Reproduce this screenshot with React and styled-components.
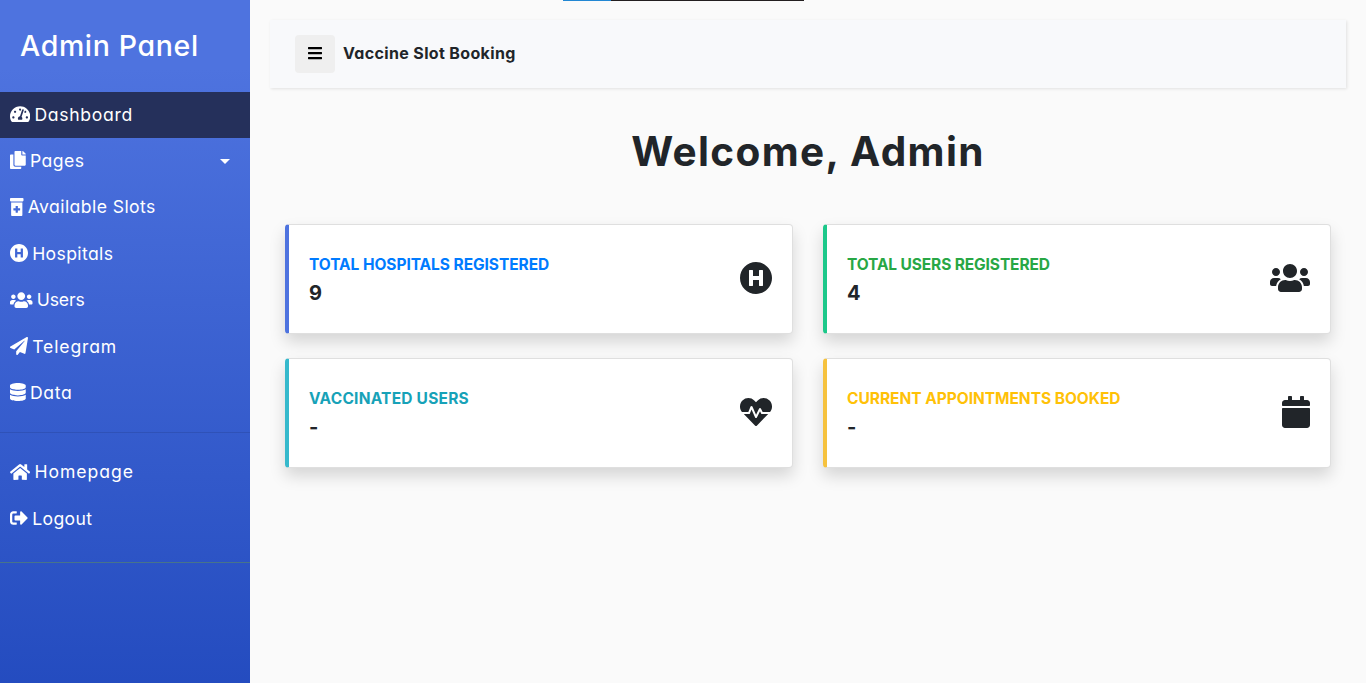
import React from "react";
import styled, { createGlobalStyle } from "styled-components";
import {
  FaTachometerAlt, FaCopy, FaPrescriptionBottleAlt, FaHospitalSymbol, FaUsers,
  FaPaperPlane, FaDatabase, FaHome, FaSignOutAlt, FaBars, FaHeartbeat, FaCalendar,
} from "react-icons/fa";

const GlobalStyle = createGlobalStyle`
  *, *::before, *::after { box-sizing: border-box; }
  body {
    margin: 0;
    background: #fafafa;
    color: #212529;
    font-family: Inter, "Open Sans", sans-serif;
    font-feature-settings: "cv11";
    font-size: 16px;
    line-height: 1.5;
    overflow: hidden;
  }
`;

const Page = styled.div`
  display: flex;
  min-height: 100vh;
`;

const Sidebar = styled.nav`
  flex: 0 0 250px;
  color: #fff;
  background: linear-gradient(180deg, #4e73df 10%, #224abe 104%);
`;

const Brand = styled.div`
  height: 91.6px;
  padding: 29px 20px 0;
  font-size: 28.5px;
  line-height: 33.6px;
  font-weight: 500;
  white-space: nowrap;
`;

const Label = styled.span`
  letter-spacing: ${(p) => p.$track || 0}px;
  white-space: nowrap;
`;

/* $units is the glyph's width on its 512-unit-high grid */
const Glyph = styled.span`
  display: flex;
  flex: none;
  width: ${(p) => (p.$size * p.$units) / 512}px;
  height: ${(p) => p.$size}px;

  svg {
    width: 100%;
    height: 100%;
  }
`;

const Menu = styled.ul`
  list-style: none;
  margin: 0;
  padding: 0 0 20px;
  border-bottom: 1px solid #47748b;
`;

const MenuItem = styled.li`
  display: flex;
  align-items: center;
  gap: 4.2px;
  height: 46.4px;
  padding: 0 20px 0 10px;
  font-size: 17.6px;
  background: ${(p) => (p.$active ? "#25305b" : "transparent")};

  ${Glyph} {
    margin-bottom: 1.4px;
  }
`;

const Caret = styled.span`
  margin-left: auto;
  border-top: 5.3px solid #fff;
  border-left: 5.5px solid transparent;
  border-right: 5.5px solid transparent;
`;

const Divider = styled.li`
  height: 1px;
  margin: 16px 0;
  background: rgba(0, 0, 0, 0.1);
`;

const Content = styled.main`
  flex: 1;
  padding: 20px;
`;

const TopBar = styled.header`
  display: flex;
  align-items: center;
  gap: 8px;
  height: 68px;
  padding: 0 25px;
  background: #f8f9fb;
  box-shadow: 1px 1px 3px rgba(0, 0, 0, 0.1);
  font-weight: 650;
`;

const AppName = styled.div`
  padding-bottom: 2px;
`;

const Toggle = styled.button`
  display: flex;
  align-items: center;
  justify-content: center;
  width: 40px;
  height: 38px;
  padding: 0 0 2px;
  border: 0;
  border-radius: 4px;
  background: #efefef;
  color: #000;
`;

const Title = styled.h1`
  margin: 40px 0 48px;
  font-size: 40.5px;
  line-height: 48px;
  font-weight: 700;
  text-align: center;
`;

const Cards = styled.section`
  display: grid;
  grid-template-columns: 1fr 1fr;
  gap: 24px 30px;
  padding: 0 15px;
`;

const Card = styled.article`
  display: flex;
  align-items: center;
  justify-content: space-between;
  height: 110px;
  padding: 0 20px 2px;
  background: #fff;
  border: 1px solid #dfdfdf;
  border-left: 4px solid ${(p) => p.$edge};
  border-radius: 4px;
  box-shadow: 0 8px 16px rgba(0, 0, 0, 0.15);
`;

const CardTitle = styled.div`
  padding-top: 1px;
  margin-bottom: 4px;
  color: ${(p) => p.$color};
  font-size: 15.5px;
  font-weight: 700;
  line-height: 24px;
  text-transform: uppercase;
`;

const CardValue = styled.div`
  font-size: 20px;
  font-weight: 700;
  line-height: 24px;
`;

const Progress = styled.div`
  position: absolute;
  top: 0;
  left: 563px;
  width: 241px;
  height: 1px;
  background: linear-gradient(90deg, #2287d3 48px, #231f20 48px);
`;

const mainLinks = [
  { icon: FaTachometerAlt, units: 576, text: "Dashboard", track: 0.68, active: true },
  { icon: FaCopy, units: 448, text: "Pages", track: 0.45, caret: true },
  { icon: FaPrescriptionBottleAlt, units: 384, text: "Available Slots", track: 0.42 },
  { icon: FaHospitalSymbol, units: 512, text: "Hospitals", track: 0.36 },
  { icon: FaUsers, units: 640, text: "Users", track: -0.1 },
  { icon: FaPaperPlane, units: 512, text: "Telegram", track: 0.86 },
  { icon: FaDatabase, units: 448, text: "Data", track: 0.65 },
];

const accountLinks = [
  { icon: FaHome, units: 576, text: "Homepage", track: 0.95 },
  { icon: FaSignOutAlt, units: 512, text: "Logout", track: 0.35 },
];

const stats = [
  { title: "Total Hospitals Registered", value: "9", icon: FaHospitalSymbol, units: 512, color: "#007bff", edge: "#4e73df", track: -0.06 },
  { title: "Total Users Registered", value: "4", icon: FaUsers, units: 640, color: "#28a745", edge: "#1cc88a", track: -0.12 },
  { title: "Vaccinated Users", value: "-", icon: FaHeartbeat, units: 512, color: "#17a2b8", edge: "#36b9cc", track: 0.22 },
  { title: "Current Appointments Booked", value: "-", icon: FaCalendar, units: 448, color: "#ffc107", edge: "#f6c23e", track: -0.03 },
];

function NavLink({ link }) {
  const Icon = link.icon;
  return (
    <MenuItem $active={link.active}>
      <Glyph $size={18} $units={link.units}><Icon /></Glyph>
      <Label $track={link.track}>{link.text}</Label>
      {link.caret && <Caret />}
    </MenuItem>
  );
}

export default function App() {
  return (
    <Page>
      <GlobalStyle />
      <Sidebar>
        <Brand><Label $track={0.65}>Admin Panel</Label></Brand>
        <Menu>
          {mainLinks.map((link) => <NavLink key={link.text} link={link} />)}
          <Divider />
          {accountLinks.map((link) => <NavLink key={link.text} link={link} />)}
        </Menu>
      </Sidebar>
      <Content>
        <TopBar>
          <Toggle><Glyph $size={16} $units={448}><FaBars /></Glyph></Toggle>
          <AppName><Label $track={0.35}>Vaccine Slot Booking</Label></AppName>
        </TopBar>
        <Title><Label $track={1.35}>Welcome, Admin</Label></Title>
        <Cards>
          {stats.map(({ title, value, icon: Icon, units, color, edge, track }) => (
            <Card key={title} $edge={edge}>
              <div>
                <CardTitle $color={color}><Label $track={track}>{title}</Label></CardTitle>
                <CardValue>{value}</CardValue>
              </div>
              <Glyph $size={32} $units={units}><Icon /></Glyph>
            </Card>
          ))}
        </Cards>
      </Content>
      <Progress />
    </Page>
  );
}
